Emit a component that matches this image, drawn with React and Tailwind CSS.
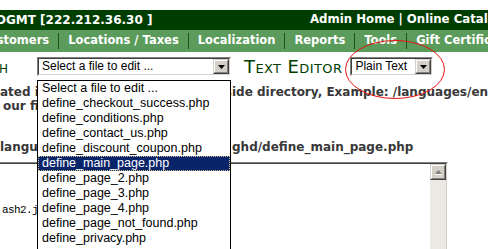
const NAV = ["Customers", "Locations / Taxes", "Localization", "Reports", "Tools", "Gift Certificates"];

const FILES = [
  "Select a file to edit ...",
  "define_checkout_success.php",
  "define_conditions.php",
  "define_contact_us.php",
  "define_discount_coupon.php",
  "define_main_page.php",
  "define_page_2.php",
  "define_page_3.php",
  "define_page_4.php",
  "define_page_not_found.php",
  "define_privacy.php",
];

function DropButton() {
  return (
    <div className="flex h-full w-[16px] shrink-0 border border-t-[#d4d0c8] border-l-[#d4d0c8] border-b-[#404040] border-r-[#404040] bg-[#d4d0c8]">
      <div className="flex flex-1 items-center justify-center border border-t-white border-l-white border-b-[#808080] border-r-[#808080]">
        <svg width="7" height="4" viewBox="0 0 7 4">
          <path d="M0 0h7L3.5 4z" fill="#000" />
        </svg>
      </div>
    </div>
  );
}

function Select({ label, className }) {
  return (
    <div className={`h-[19px] shrink-0 border border-t-[#808080] border-l-[#808080] border-b-white border-r-white ${className}`}>
      <div className="flex h-full border border-t-[#404040] border-l-[#404040] border-b-[#d4d0c8] border-r-[#d4d0c8] bg-white">
        <span className="flex-1 truncate pl-[3px] font-['Liberation_Sans',Arial,sans-serif] text-[12px] leading-[15px] text-black">
          {label}
        </span>
        <DropButton />
      </div>
    </div>
  );
}

export default function App() {
  return (
    <div className="relative h-[249px] w-[488px] overflow-hidden bg-white font-['DejaVu_Sans',Verdana,sans-serif]">
      <div className="h-[10px]" />

      {/* top bar */}
      <header className="flex h-[20px] items-center whitespace-nowrap bg-[#003d00] font-bold text-white">
        <span className="-ml-[4px] w-[314px] shrink-0 text-[12px]">DGMT [222.212.36.30 ]</span>
        <span className="text-[11.75px]">Admin Home | Online Catalog | Support Site</span>
      </header>

      {/* menu */}
      <nav className="-ml-[29px] flex h-[22px] items-center whitespace-nowrap bg-[#5b9b5b] text-[11.5px] font-bold text-white">
        {NAV.map((item, i) => (
          <div key={item} className="flex h-full items-center">
            {i > 0 && <span className="h-[16px] w-px bg-[#1f4f1f]" />}
            <span className="px-[9px]">{item}</span>
          </div>
        ))}
      </nav>

      {/* heading row */}
      <div className="mt-[5px] flex h-[19px] items-center">
        <div className="flex w-[8px] shrink-0 justify-end self-end overflow-hidden">
          <span className="whitespace-nowrap text-[17px] leading-[18px] text-[#003e00] [font-variant:small-caps]">
            English
          </span>
        </div>
        <Select label="Select a file to edit ..." className="ml-[29px] w-[194px]" />
        <h1 className="ml-[13px] whitespace-nowrap text-[18px] leading-[19px] tracking-[0.4px] text-[#003e00] [font-variant:small-caps]">
          Text Editor
        </h1>
        <Select label="Plain Text" className="ml-[8px] w-[83px]" />
      </div>

      {/* description */}
      <div className="mt-[9px] text-[12px] font-bold leading-[14px] text-[#383838]">
        <div className="flex whitespace-nowrap">
          <span className="w-[232px] shrink-0 overflow-hidden">ated in the catalog/includes/languages/ins</span>
          <span>ide directory, Example: /languages/english/</span>
        </div>
        <div className="whitespace-nowrap pl-[3px]">our file below.</div>
        <div className="mt-[27px] flex whitespace-nowrap">
          <span className="w-[232px] shrink-0 overflow-hidden">languages/english/</span>
          <span>ghd/define_main_page.php</span>
        </div>
      </div>

      {/* textarea */}
      <div className="-ml-[10px] mt-[8px] h-[100px] w-[458px] border border-t-[#808080] border-l-[#808080] border-b-white border-r-white">
        <div className="flex h-full border border-t-[#404040] border-l-[#404040] border-b-[#d4d0c8] border-r-[#d4d0c8] bg-white">
          <div className="flex-1 pl-[10px] pt-px font-['Liberation_Mono','Courier_New',monospace] text-[11px] leading-[13px] tracking-[-0.6px] text-black">
            <div>&nbsp;</div>
            <div>&nbsp;</div>
            <div>&nbsp;</div>
            <div className="whitespace-nowrap">ash2.js"&gt;&lt;/script&gt;</div>
          </div>
          <div className="flex w-[16px] flex-col bg-[#ebe9e3]">
            <div className="h-[16px] border border-t-[#d4d0c8] border-l-[#d4d0c8] border-b-[#404040] border-r-[#404040] bg-[#d4d0c8]">
              <div className="flex h-full items-center justify-center border border-t-white border-l-white border-b-[#808080] border-r-[#808080]">
                <svg width="7" height="5" viewBox="0 0 7 5">
                  <path d="M3.5 0L7 4H0z" fill="#808080" />
                  <path d="M0 4.5h7" stroke="#fff" />
                </svg>
              </div>
            </div>
          </div>
        </div>
      </div>

      {/* open select list */}
      <ul className="absolute left-[37px] top-[80px] z-10 h-[180px] w-[194px] border border-black bg-white font-['Liberation_Sans',Arial,sans-serif] text-[12.5px] leading-[13px] text-black">
        {FILES.map((f) =>
          f === "define_main_page.php" ? (
            <li key={f} className="border border-dotted border-[#d8c890] bg-[#0a246a] pl-[3px] text-white">
              {f}
            </li>
          ) : (
            <li key={f} className="border border-transparent pl-[3px]">
              {f}
            </li>
          )
        )}
      </ul>

      {/* red annotation */}
      <svg className="absolute left-[344px] top-[39px] z-20" width="102" height="61" viewBox="0 0 102 61">
        <ellipse cx="51" cy="30.5" rx="49.5" ry="29" fill="none" stroke="#e81010" strokeWidth="1" />
      </svg>
    </div>
  );
}
